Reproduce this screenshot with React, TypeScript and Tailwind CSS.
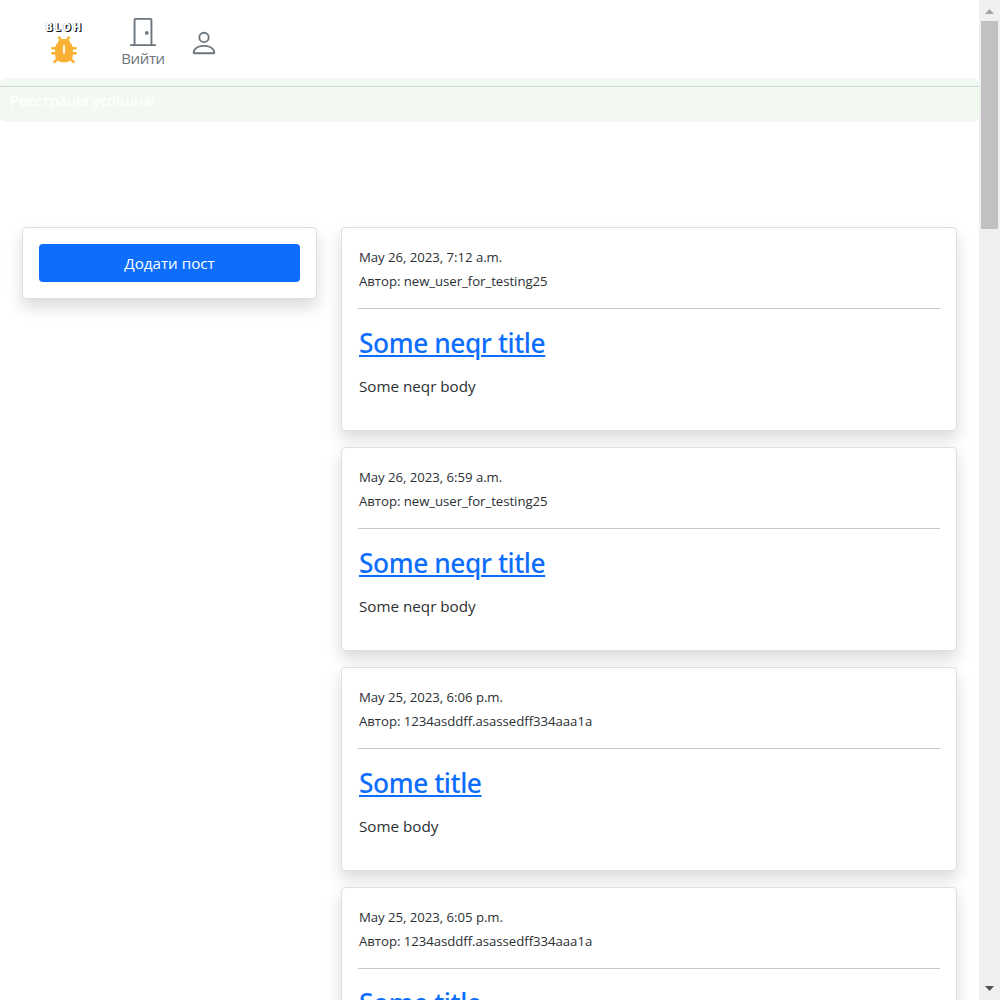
import { BsDoorClosed, BsPerson } from 'react-icons/bs';

type Post = { date: string; author: string; title: string; body: string };

const posts: Post[] = [
  { date: 'May 26, 2023, 7:12 a.m.', author: 'new_user_for_testing25', title: 'Some neqr title', body: 'Some neqr body' },
  { date: 'May 26, 2023, 6:59 a.m.', author: 'new_user_for_testing25', title: 'Some neqr title', body: 'Some neqr body' },
  { date: 'May 25, 2023, 6:06 p.m.', author: '1234asddff.asassedff334aaa1a', title: 'Some title', body: 'Some body' },
  { date: 'May 25, 2023, 6:05 p.m.', author: '1234asddff.asassedff334aaa1a', title: 'Some title', body: 'Some body' },
];

function Logo() {
  return (
    <a className="flex w-[40px] flex-col items-center pt-[22px]" href="#">
      <span className="block h-[10px] pl-px font-['Inter'] text-[10px] leading-[10px] font-black tracking-[2.5px] text-white [text-shadow:1px_1px_0_#111,1px_0_0_#333,0_0_1px_#777]">
        BLOH
      </span>
      <svg className="mt-[3px] h-[30px] w-[28px]" viewBox="0 0 28 30" fill="none" stroke="#f9b233" strokeWidth="2.5" strokeLinecap="round">
        <path d="M9.2 2.500 11 5.500M18.800 2.500 17 5.500M2.300 13.200h5M25.700 13.200h-5M2.300 18.200h5M25.700 18.200h-5M4.400 27l4-4M23.600 27l-4-4" />
        <path d="M9.300 4h9.400l1.300 3.500c1.900 1.500 2.800 3.500 2.800 6v7c0 4-3.600 7-8.800 7s-8.800-3-8.800-7v-7c0-2.500 0.900-4.500 2.800-6z" fill="#f9b233" stroke="none" />
        <path d="M14 11v7" stroke="#fff" strokeWidth="1.8" />
      </svg>
    </a>
  );
}

function PostCard({ post }: { post: Post }) {
  return (
    <article className="h-[204px] shrink-0 rounded border border-[#dfdfdf] bg-white p-4 shadow-[0_8px_16px_rgba(0,0,0,0.15)]">
      <p className="-mb-px pt-px pl-px text-[13.2px] leading-6 tracking-[-0.04px] whitespace-nowrap">
        {post.date}
        <br />
        Автор: {post.author}
      </p>
      <hr className="my-4 border-[#c7c8c9]" />
      <h3 className="mb-[13px] pl-px font-['Noto_Sans'] text-[26.3px] leading-[36px] font-medium tracking-[-0.43px]">
        <a className="text-[#0d6efd] underline decoration-2 underline-offset-2" href="#">{post.title}</a>
      </h3>
      <p className="pl-px text-[15.2px] leading-6">{post.body}</p>
    </article>
  );
}

function ScrollBar() {
  return (
    <div className="flex h-full w-[21px] shrink-0 flex-col items-center bg-[#f0f0f0]">
      <div className="flex h-[21px] items-center justify-center">
        <svg width="9" height="5" viewBox="0 0 9 5" className="mt-[2px]"><path d="M4.5 0 9 5H0z" fill="#a3a3a3" /></svg>
      </div>
      <div className="h-[208px] w-[17px] bg-[#c1c1c1]" />
      <svg width="9" height="5" viewBox="0 0 9 5" className="mt-auto mb-[9px]"><path d="M4.5 5 9 0H0z" fill="#505050" /></svg>
    </div>
  );
}

export default function App() {
  return (
    <div className="flex h-[1000px] w-[1000px] overflow-hidden bg-white font-['Open_Sans','Noto_Sans',sans-serif] text-[#2b2f33]">
      <div className="relative h-full w-[979px] shrink-0 overflow-hidden">
        <header className="flex h-[87px] border-b border-[#d8dce0] pl-[44px]">
          <Logo />
          <a className="ml-[37px] flex w-[44px] flex-col items-center pt-4 text-[#6c757d]" href="#">
            <BsDoorClosed className="size-[30px] shrink-0" />
            <span className="text-[15px] leading-6 tracking-[-0.35px]">Вийти</span>
          </a>
          <a className="ml-[24px] pt-[28px] text-[#6c757d]" href="#">
            <BsPerson className="size-[30px]" />
          </a>
        </header>

        <div className="absolute top-[78px] left-0 h-[44px] w-full rounded-[6px] bg-[rgba(76,175,80,0.08)] px-[10px] text-[15px] leading-[45px] font-semibold tracking-[-0.3px] text-white">
          Реєстрація успішна!
        </div>

        <main className="flex items-start gap-6 pt-[140px] pl-[22px]">
          <aside className="w-[295px] rounded border border-[#dfdfdf] bg-white p-4 shadow-[0_8px_16px_rgba(0,0,0,0.15)]">
            <button className="block h-[38px] w-full rounded bg-[#0d6efd] text-[15.2px] text-white">Додати пост</button>
          </aside>
          <section className="flex w-[616px] flex-col gap-4">
            {posts.map((post) => (
              <PostCard key={post.date} post={post} />
            ))}
          </section>
        </main>
      </div>
      <ScrollBar />
    </div>
  );
}
